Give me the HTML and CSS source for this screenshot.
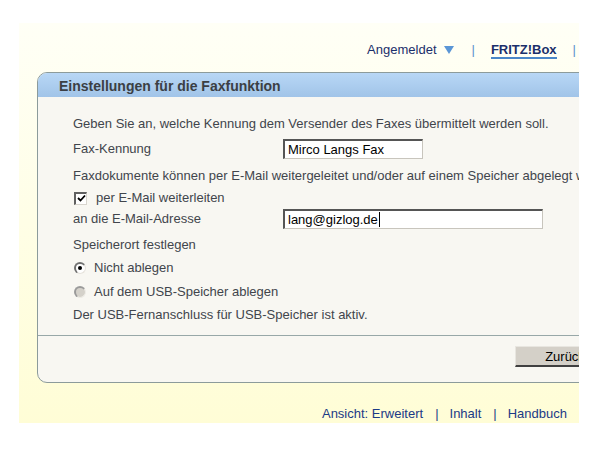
FILE: index.html
```html
<!DOCTYPE html>
<html lang="de">
<head>
<meta charset="utf-8">
<title>Einstellungen für die Faxfunktion</title>
<link rel="stylesheet" href="styles.css">
</head>
<body>
<div class="frame">
  <nav class="topnav">
    <span class="nav-item">Angemeldet</span>
    <span class="tri"></span>
    <span class="sep first">|</span>
    <span class="nav-item brand">FRITZ!Box</span>
    <span class="sep">|</span>
  </nav>

  <section class="box">
    <h1 class="box-head">Einstellungen für die Faxfunktion</h1>
    <div class="box-body">
      <p class="line">Geben Sie an, welche Kennung dem Versender des Faxes übermittelt werden soll.</p>
      <div class="field g4">
        <span class="label">Fax-Kennung</span>
        <div class="input w140">Mirco Langs Fax</div>
      </div>
      <p class="line g8">Faxdokumente können per E-Mail weitergeleitet und/oder auf einem Speicher abgelegt werden.</p>
      <div class="opt g2">
        <span class="check"><svg viewBox="0 0 9 9" width="9" height="9"><path d="M1 4 L3.5 6.5 L8 1.5" fill="none" stroke="#000" stroke-width="1.8"/></svg></span>
        <span class="opt-text">per E-Mail weiterleiten</span>
      </div>
      <div class="field">
        <span class="label">an die E-Mail-Adresse</span>
        <div class="input w260">lang@gizlog.de<span class="caret"></span></div>
      </div>
      <p class="line g7">Speicherort festlegen</p>
      <div class="opt g3">
        <span class="radio on"></span>
        <span class="opt-text r">Nicht ablegen</span>
      </div>
      <div class="opt g4">
        <span class="radio off"></span>
        <span class="opt-text r">Auf dem USB-Speicher ablegen</span>
      </div>
      <p class="line g3">Der USB-Fernanschluss für USB-Speicher ist aktiv.</p>
    </div>
    <div class="actions">
      <span class="btn">Zurück</span>
    </div>
  </section>

  <footer class="foot">
    <span class="foot-link">Ansicht: Erweitert</span>
    <span class="foot-sep">|</span>
    <span class="foot-link">Inhalt</span>
    <span class="foot-sep">|</span>
    <span class="foot-link">Handbuch</span>
  </footer>
</div>
</body>
</html>
```

FILE: styles.css
```css
html, body {
  margin: 0;
  padding: 0;
  background: #ffffff;
}

body {
  font-family: "Liberation Sans", Arial, sans-serif;
  font-size: 13px;
}

.frame {
  margin: 23px 0 0 19px;
  width: 560px;
  height: 400px;
  overflow: hidden;
  background: linear-gradient(#fffff6, #fffdd6);
}

/* top navigation */
.topnav {
  height: 49px;
  box-sizing: border-box;
  padding: 19px 3px 0 0;
  display: flex;
  justify-content: flex-end;
  align-items: flex-start;
  line-height: 16px;
  color: #1b2f6b;
}

.tri {
  width: 0;
  height: 0;
  margin: 4px 0 0 7px;
  border-left: 5px solid transparent;
  border-right: 5px solid transparent;
  border-top: 8px solid #5b96d6;
}

.sep {
  color: #5a8fcc;
  margin-left: 16px;
}

.sep.first {
  margin-left: 18px;
}

.brand {
  font-weight: bold;
  margin-left: 16px;
  border-bottom: 2px solid #4a86c8;
  line-height: 15px;
}

/* settings box */
.box {
  margin-left: 18px;
  width: 591px;
  border: 1px solid #8c9b9b;
  border-radius: 10px;
  background: #f8f7f2;
  overflow: hidden;
}

.box-head {
  margin: 0;
  height: 24px;
  line-height: 26px;
  padding-left: 21px;
  font-size: 14px;
  font-weight: bold;
  color: #3b3f44;
  background: linear-gradient(#b8d7f6, #a1c4e8);
}

.box-body {
  padding: 17px 0 10px 35px;
  color: #41454c;
  white-space: nowrap;
}

.line {
  margin: 0;
  height: 20px;
  line-height: 20px;
}

.g2 { margin-top: 2px; }
.g3 { margin-top: 3px; }
.g4 { margin-top: 4px; }
.g7 { margin-top: 7px; }
.g8 { margin-top: 8px; }

.field {
  display: grid;
  grid-template-columns: 210px auto;
  align-items: center;
  height: 20px;
}

.label {
  line-height: 22px;
}

.input {
  box-sizing: border-box;
  height: 20px;
  padding-left: 3px;
  line-height: 16px;
  background: #ffffff;
  color: #000000;
  border-style: solid;
  border-width: 2px 1px 1px 2px;
  border-color: #555555 #c8c5bd #c8c5bd #555555;
  display: flex;
  align-items: center;
}

.w140 { width: 140px; }
.w260 { width: 260px; }

.caret {
  display: inline-block;
  width: 1px;
  height: 15px;
  background: #000;
  margin-left: 1px;
}

.opt {
  display: flex;
  align-items: center;
  height: 20px;
}

.opt-text {
  line-height: 20px;
  margin-left: 9px;
}

.opt-text.r {
  margin-left: 8px;
}

.check {
  box-sizing: border-box;
  width: 13px;
  height: 13px;
  margin-left: 1px;
  background: #ffffff;
  border-style: solid;
  border-width: 2px 1px 1px 2px;
  border-color: #606060 #d8d5ce #d8d5ce #606060;
  display: flex;
  align-items: center;
  justify-content: center;
}

.radio {
  box-sizing: border-box;
  width: 12px;
  height: 12px;
  margin-left: 1px;
  border-radius: 50%;
  border-style: solid;
  border-width: 2px 1px 1px 2px;
  border-color: #707070 #e6e3dc #e6e3dc #707070;
  position: relative;
}

.radio.on {
  background: #ffffff;
}

.radio.on::after {
  content: "";
  position: absolute;
  left: 2px;
  top: 2px;
  width: 4px;
  height: 4px;
  border-radius: 50%;
  background: #000000;
}

.radio.off {
  background: #d4d1ca;
  border-color: #9a9a9a #eeece6 #eeece6 #9a9a9a;
}

.actions {
  border-top: 1px solid #98a8a8;
  padding: 10px 0 15px 0;
  display: flex;
  justify-content: flex-end;
}

.btn {
  box-sizing: border-box;
  width: 100px;
  height: 21px;
  margin-right: 14px;
  line-height: 19px;
  text-align: center;
  color: #000000;
  background: #d4d0c8;
  border-style: solid;
  border-width: 1px 1px 2px 1px;
  border-color: #e8e6e0 #404040 #404040 #e8e6e0;
}

/* footer links */
.foot {
  display: flex;
  justify-content: flex-end;
  padding: 23px 12px 0 0;
  line-height: 16px;
  color: #1b3a86;
}

.foot-link {
  color: #1b3a86;
}

.foot-sep {
  color: #1b3a86;
  margin: 0 11px 0 12px;
}
```
